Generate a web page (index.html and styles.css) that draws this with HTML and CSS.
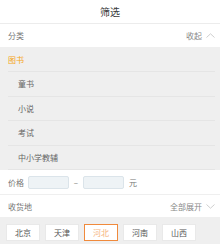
FILE: index.html
```html
<!DOCTYPE html>
<html lang="zh">
<head>
<meta charset="utf-8">
<title>筛选</title>
<link rel="stylesheet" href="styles.css">
</head>
<body>
<div class="page">
  <header class="header">筛选</header>
  <div class="row">
    <span class="label">分类</span>
    <span class="toggle">收起
      <svg class="chev" width="9" height="5" viewBox="0 0 9 5"><polyline points="0.5,4.5 4.5,0.8 8.5,4.5" fill="none" stroke="#cfcfcf" stroke-width="1"/></svg>
    </span>
  </div>
  <div class="cats">
    <div class="cat cat-head">图书</div>
    <div class="cat">童书</div>
    <div class="cat">小说</div>
    <div class="cat">考试</div>
    <div class="cat">中小学教辅</div>
  </div>
  <div class="row price">
    <span class="label">价格</span>
    <span class="box"></span>
    <span class="dash">–</span>
    <span class="box"></span>
    <span class="unit">元</span>
  </div>
  <div class="row addr">
    <span class="label">收货地</span>
    <span class="toggle">全部展开
      <svg class="chev" width="9" height="5" viewBox="0 0 9 5"><polyline points="0.5,0.5 4.5,4.2 8.5,0.5" fill="none" stroke="#cfcfcf" stroke-width="1"/></svg>
    </span>
  </div>
  <div class="areas">
    <span class="area">北京</span>
    <span class="area">天津</span>
    <span class="area active">河北</span>
    <span class="area">河南</span>
    <span class="area">山西</span>
  </div>
</div>
</body>
</html>
```
FILE: styles.css
```css
html, body {
  margin: 0;
  padding: 0;
  background: #ffffff;
}
body {
  font-family: "Noto Sans CJK SC", "Noto Sans", sans-serif;
  color: #333;
}
.page {
  width: 220px;
  height: 244px;
  overflow: hidden;
  display: flex;
  flex-direction: column;
}
.header {
  height: 23px;
  border-bottom: 1px solid #ececec;
  display: flex;
  align-items: center;
  justify-content: center;
  font-size: 10px;
  color: #3a3a3a;
}
.row {
  height: 23px;
  display: flex;
  align-items: center;
  justify-content: space-between;
  padding: 0 5px 0 8px;
  font-size: 8px;
  color: #777;
}
.label {
  color: #777;
}
.toggle {
  display: flex;
  align-items: center;
  gap: 4px;
  color: #888;
}
.chev {
  display: block;
}
.cats {
  background: #efefef;
  display: flex;
  flex-direction: column;
}
.cat {
  height: 23.5px;
  margin: 0 5px 0 8px;
  padding-left: 10px;
  border-bottom: 1px solid #e5e5e5;
  display: flex;
  align-items: center;
  font-size: 8px;
  color: #666;
}
.cat-head {
  height: 24px;
  padding-left: 0;
  color: #f5a623;
}
.price {
  height: 24px;
  justify-content: flex-start;
  border-bottom: 1px solid #efefef;
}
.price .label {
  width: 20px;
}
.box {
  width: 39px;
  height: 11px;
  background: #eef3f6;
  border: 1px solid #dbe4ea;
  border-radius: 2px;
}
.dash {
  width: 14px;
  text-align: center;
  color: #777;
}
.unit {
  margin-left: 5px;
  color: #777;
}
.addr {
  height: 22px;
}
.areas {
  flex: 1;
  background: #efefef;
  display: flex;
  gap: 5px;
  padding: 7px 6px 0;
}
.area {
  width: 32px;
  height: 15px;
  background: #ffffff;
  border: 1px solid #e9e9e9;
  display: flex;
  align-items: center;
  justify-content: center;
  font-size: 8px;
  color: #555;
}
.area.active {
  border-color: #f08a3c;
  color: #f6b27c;
}
```
